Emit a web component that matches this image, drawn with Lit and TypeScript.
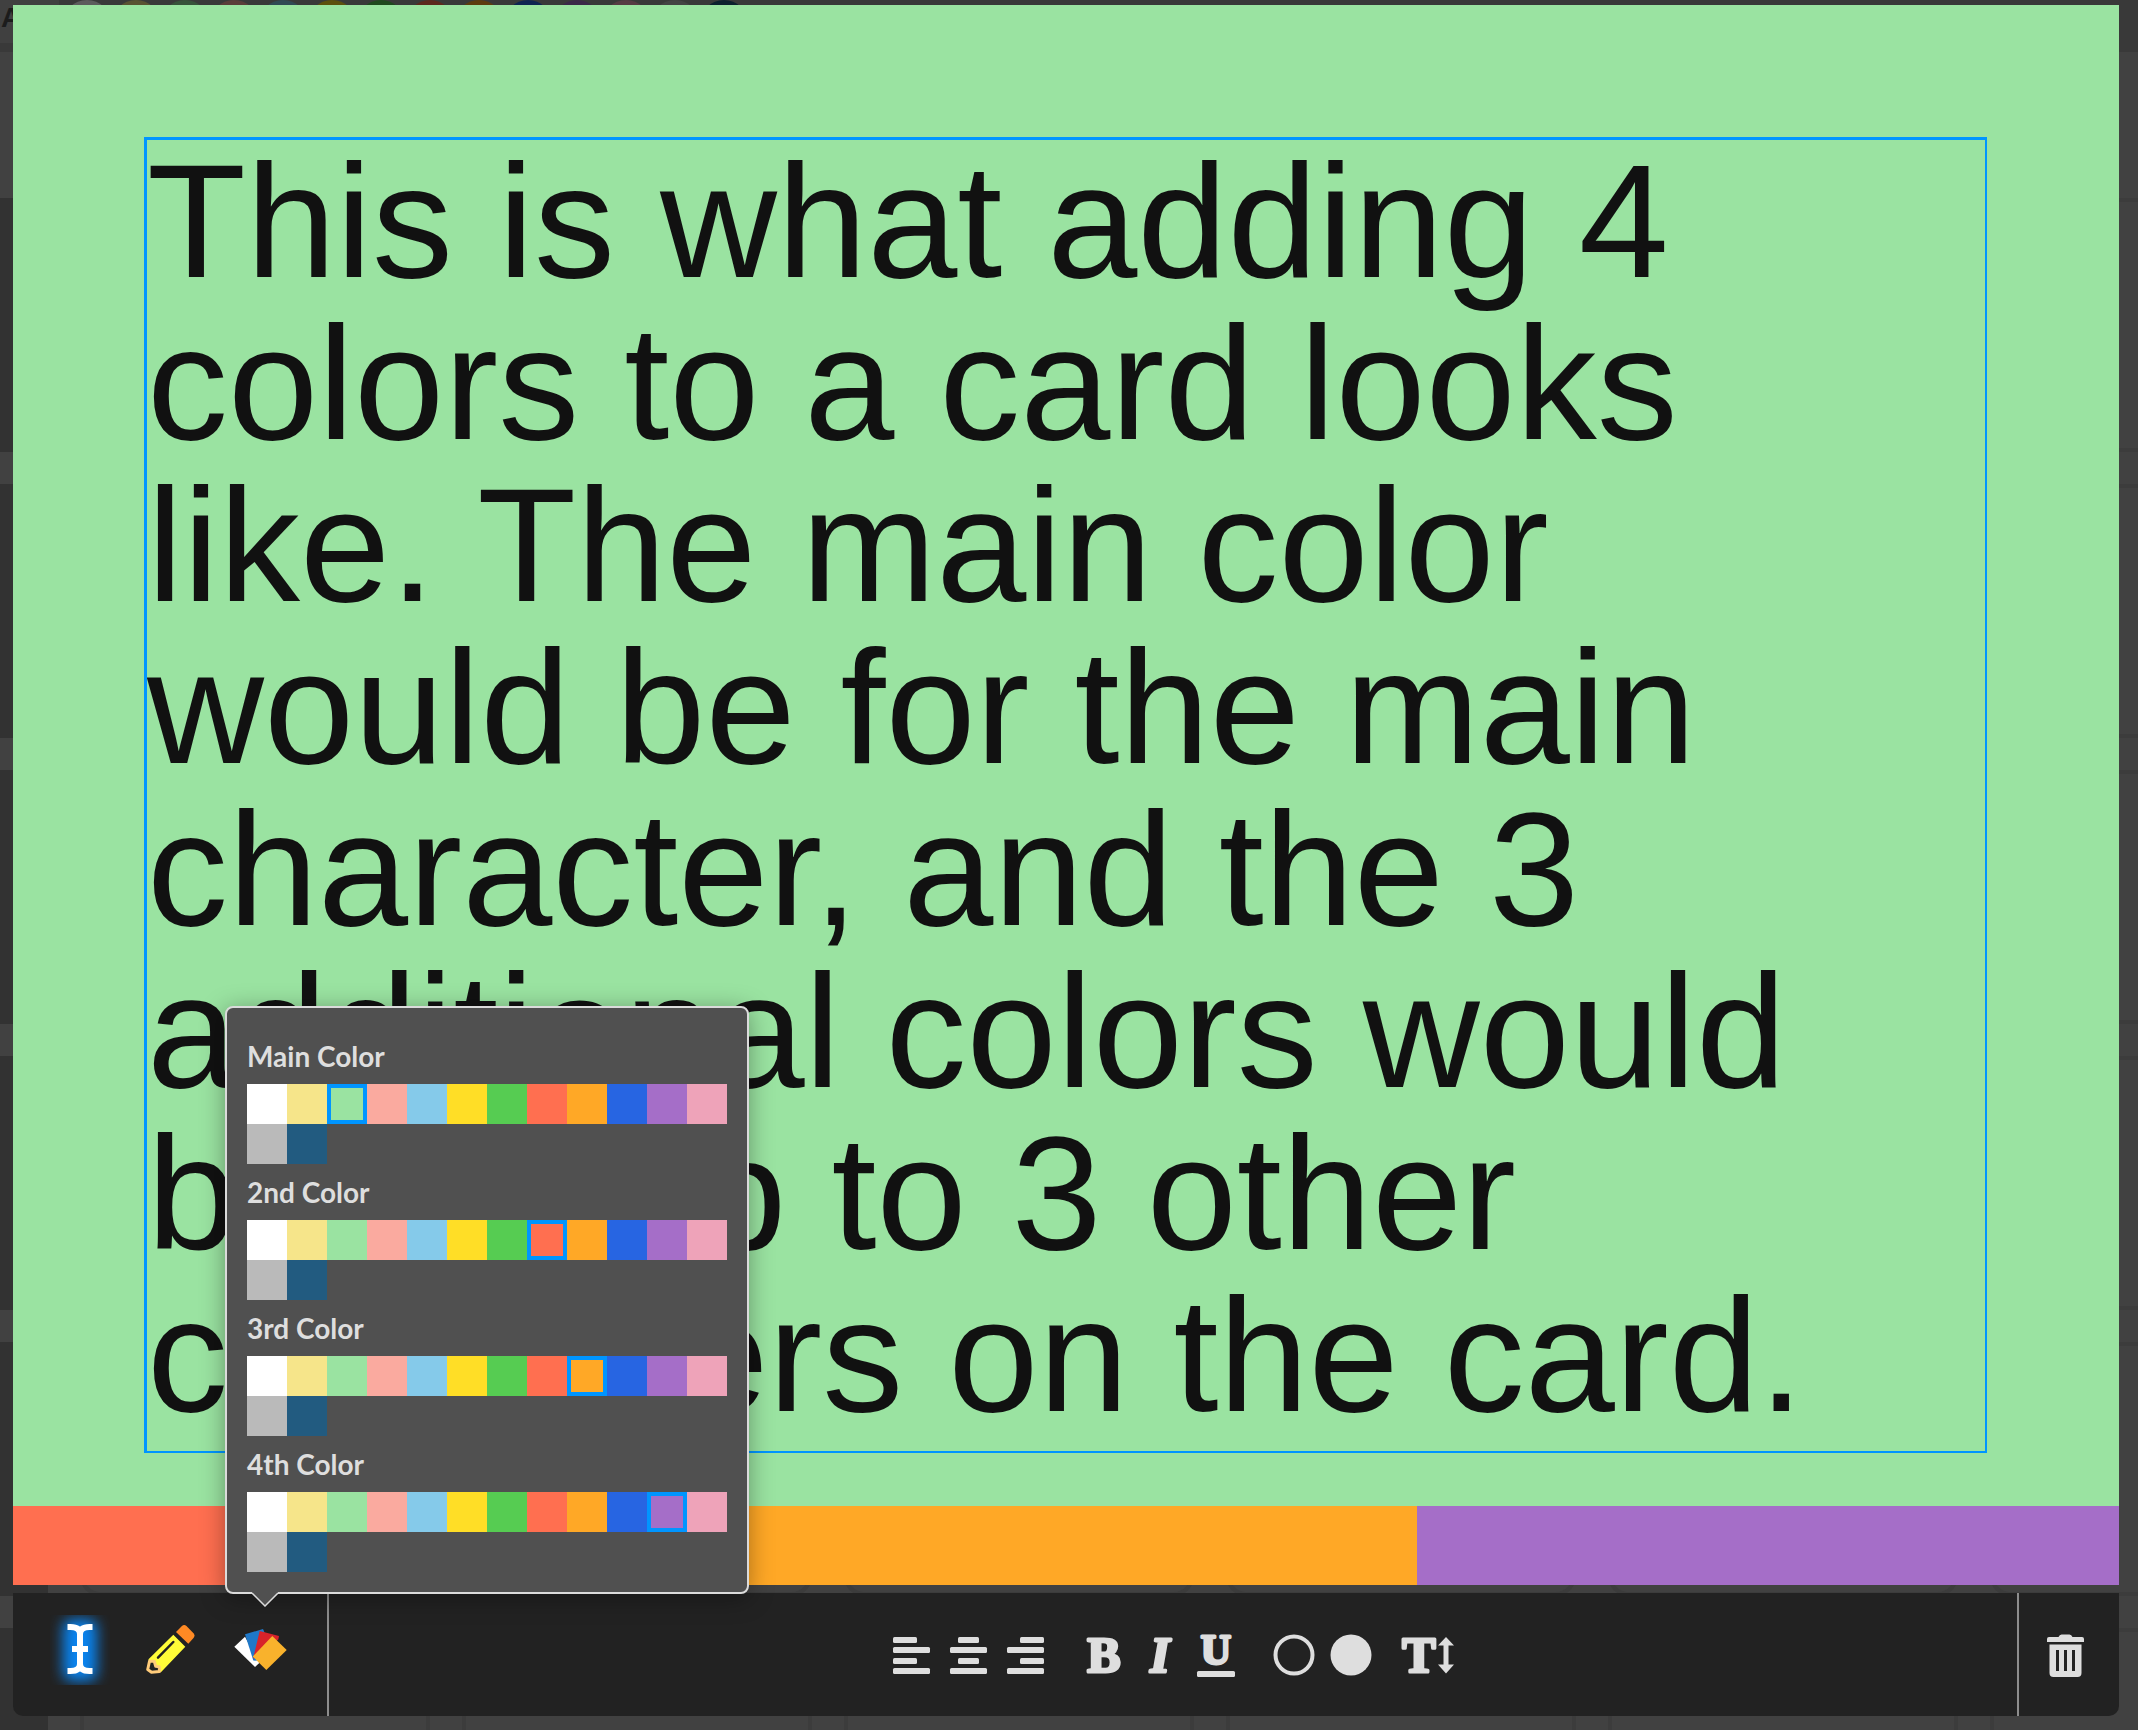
import { LitElement, html, css, svg } from "lit";
import { customElement, state } from "lit/decorators.js";
import { classMap } from "lit/directives/class-map.js";

interface Swatch {
  name: string;
  value: string;
}

const PALETTE: Swatch[] = [
  { name: "White", value: "#ffffff" },
  { name: "Cream", value: "#f6e58a" },
  { name: "Mint", value: "#9ae3a1" },
  { name: "Salmon", value: "#faaa9f" },
  { name: "Sky", value: "#85caea" },
  { name: "Yellow", value: "#ffde26" },
  { name: "Green", value: "#56cc52" },
  { name: "Coral", value: "#ff6f50" },
  { name: "Orange", value: "#ffa826" },
  { name: "Blue", value: "#2765e2" },
  { name: "Purple", value: "#a56ec8" },
  { name: "Pink", value: "#eea3b9" },
  { name: "Grey", value: "#bababa" },
  { name: "Navy", value: "#225b80" },
];

const LABELS = ["Main Color", "2nd Color", "3rd Color", "4th Color"];

const STORY =
  "This is what adding 4 colors to a card looks like. The main color would be for the main character, and the 3 additional colors would be for up to 3 other characters on the card.";

const bars = (rows: number[][]) =>
  svg`${rows.map(([x, w], i) => svg`<rect x=${x} y=${[6, 16, 27, 37][i]} width=${w} height="6" rx="1.5"/>`)}`;

@customElement("board-backdrop")
export class BoardBackdrop extends LitElement {
  static styles = css`
    :host {
      display: block;
      height: 100%;
      overflow: hidden;
      background: #414141;
    }
    .topbar {
      height: 52px;
      display: flex;
      align-items: flex-start;
      background: #393939;
      box-sizing: border-box;
    }
    .name {
      flex: none;
      width: 59px;
      height: 43px;
      padding-left: 1px;
      box-sizing: border-box;
      background: #404040;
      color: #1c1c1c;
      font: bold 28px/36px "Liberation Sans", Arial, sans-serif;
    }
    .dots {
      display: flex;
      gap: 1px;
      padding-left: 4px;
    }
    .dot {
      width: 48px;
      height: 48px;
      border-radius: 50%;
      filter: brightness(0.36);
    }
    .board {
      padding-top: 146px;
      display: grid;
      grid-template-columns: 48px 1fr;
      column-gap: 32px;
    }
    .chapters,
    .cards {
      display: grid;
      grid-auto-rows: 254px;
      gap: 32px;
    }
    .chapter {
      background: #323232;
    }
    .cards {
      grid-template-columns: repeat(6, 350px);
    }
    .slot {
      border: 4px solid #3c3c3c;
      border-radius: 20px;
    }
  `;

  render() {
    return html`
      <div class="topbar">
        <div class="name">A</div>
        <div class="dots">
          ${PALETTE.map((s) => html`<span class="dot" style="background:${s.value}"></span>`)}
        </div>
      </div>
      <div class="board">
        <div class="chapters">${Array.from({ length: 6 }, () => html`<div class="chapter"></div>`)}</div>
        <div class="cards">${Array.from({ length: 36 }, () => html`<div class="slot"></div>`)}</div>
      </div>
    `;
  }
}

@customElement("app-root")
export class AppRoot extends LitElement {
  @state() private picked = [2, 7, 8, 10];

  static styles = css`
    :host {
      display: block;
      position: relative;
      min-height: 100vh;
      overflow: hidden;
      font-family: Lato, "Liberation Sans", sans-serif;
    }
    .backdrop {
      position: absolute;
      inset: 0;
    }
    .editor {
      position: relative;
      display: flex;
      flex-direction: column;
      gap: 8px;
      padding: 5px 19px 14px 13px;
    }
    .body {
      padding: 132px 132px 53px 131px;
    }
    .story {
      display: block;
      box-sizing: border-box;
      width: 100%;
      margin: 0;
      padding: 0 0 15px;
      border: solid #0095ff;
      border-width: 3px 2px 2px 3px;
      border-radius: 0;
      background: none;
      color: #111;
      font: 162px/162px "Liberation Sans", Arial, sans-serif;
      resize: none;
      outline: none;
      overflow: hidden;
    }
    .bands {
      display: flex;
      height: 79px;
    }
    .band {
      flex: 1;
    }
    .toolbar {
      position: relative;
      display: flex;
      height: 123px;
      background: #222;
      border-radius: 0 0 10px 10px;
    }
    .modes,
    .format,
    .danger,
    .set {
      display: flex;
      align-items: center;
      justify-content: center;
    }
    .modes {
      padding: 0 22px 10px;
      border-right: 2px solid #8d8d8d;
    }
    .format {
      flex: 1;
      gap: 20px;
    }
    .danger {
      border-left: 2px solid #8d8d8d;
    }
    button {
      display: flex;
      align-items: center;
      justify-content: center;
      padding: 0;
      border: 0;
      background: none;
      color: #dedede;
      cursor: pointer;
    }
    .mode {
      width: 90px;
      height: 70px;
    }
    .tool {
      width: 57px;
      height: 80px;
    }
    .size {
      width: 62px;
    }
    .trash {
      width: 100px;
      height: 80px;
    }
    svg {
      display: block;
      flex: none;
      fill: currentColor;
    }
    .active svg {
      overflow: hidden;
    }
    .halo {
      filter: blur(7px);
    }
    .letter {
      font: bold 50px "Liberation Serif", serif;
      stroke: currentColor;
      stroke-width: 3px;
      stroke-linejoin: round;
    }
    .letter.small {
      font-size: 42px;
    }
    .letter.slant {
      font-style: italic;
    }
    .popup {
      position: absolute;
      left: 212px;
      bottom: 122px;
      width: 480px;
      padding: 20px;
      border: 2px solid #dbdbdb;
      border-radius: 8px;
      background: #505050;
      box-shadow: 0 4px 24px rgba(0, 0, 0, 0.35);
    }
    .arrow {
      position: absolute;
      left: 24px;
      top: 100%;
    }
    .label {
      color: #dedede;
      font-size: 28px;
      font-weight: 700;
      line-height: 56px;
    }
    .swatches {
      display: flex;
      flex-wrap: wrap;
    }
    .swatch {
      appearance: none;
      width: 40px;
      height: 40px;
      margin: 0;
      border: 0 solid #0095ff;
      border-radius: 0;
      cursor: pointer;
    }
    .swatch.on {
      border-width: 4px;
    }
  `;

  private pick(slot: number, index: number) {
    this.picked = this.picked.map((v, i) => (i === slot ? index : v));
  }

  private renderPicker(label: string, slot: number) {
    return html`
      <div role="radiogroup" aria-labelledby="label-${slot}">
        <div class="label" id="label-${slot}">${label}</div>
        <div class="swatches">
          ${PALETTE.map(
            (s, i) => html`<input
              type="radio"
              name="color-${slot}"
              aria-label=${s.name}
              class=${classMap({ swatch: true, on: this.picked[slot] === i })}
              style="background:${s.value}"
              .checked=${this.picked[slot] === i}
              @change=${() => this.pick(slot, i)}
            />`
          )}
        </div>
      </div>
    `;
  }

  private tool(label: string, icon: unknown) {
    return html`<button class="tool" type="button" aria-label=${label}>
      <svg width="57" height="80" viewBox="0 -16 57 80">${icon}</svg>
    </button>`;
  }

  render() {
    const color = (slot: number) => PALETTE[this.picked[slot]].value;
    return html`
      <board-backdrop class="backdrop" aria-hidden="true"></board-backdrop>
      <main class="editor">
        <section class="card" style="background:${color(0)}">
          <div class="body">
            <textarea class="story" rows="8" aria-label="Card text" spellcheck="false" .value=${STORY}></textarea>
          </div>
          <div class="bands">
            ${[1, 2, 3].map((n) => html`<div class="band" style="background:${color(n)}"></div>`)}
          </div>
        </section>

        <div class="toolbar">
          <div class="modes">
            <button class="mode active" type="button" aria-label="Text">
              <svg width="60" height="70" viewBox="0 0 60 70">
                <rect class="halo" x="13" y="4" width="34" height="62" rx="8" fill="#0a84f0" />
                <g fill="none" stroke="#fff" stroke-width="6" stroke-linejoin="round">
                  <path d="M17.5 12h3q9.500 0 9.500 7v30q0 7-9.500 7h-3M42.500 12h-3q-9.500 0-9.500 7v30q0 7 9.500 7h3M22 34h16" />
                </g>
              </svg>
            </button>
            <button class="mode" type="button" aria-label="Draw">
              <svg width="49" height="49" viewBox="0 0 49 49">
                <path fill="#fffc38" d="M27.300 9.700 39.300 21.700 14.700 47.500 13 41.500 9.500 41 8 36 2.500 35.500V34.300Z" />
                <path stroke="#222" stroke-width="2.500" stroke-linecap="round" d="M12 32.700 27.300 17" />
                <path fill="#ff8a24" d="M30 7 35.700 1.200Q38 -1 40.500 1L47.500 8.200Q49.500 10.500 47.500 13L42.300 18.700Z" />
                <path fill="#222" stroke="#ffcb7a" stroke-width="3" stroke-linejoin="round"
                  d="M3.500 36.300 1.700 44.500 5.500 47.300 13.500 46.500 13.200 41.700 9.700 41.300 8.300 36.300Z" />
              </svg>
            </button>
            <button class="mode" type="button" aria-label="Colors" aria-expanded="true">
              <svg width="53" height="42" viewBox="0 0 53 42">
                <path fill="#fff" d="M.3 17.700 11 7.700 25.300 34 21 38Z" />
                <path fill="#1f78c8" d="M11 5.300 29 0 30.500 3.500 22.700 31.700 19.300 31.500Z" />
                <path fill="#d8232a" d="M25.700 2 45 7 44.300 10.500 19 29.800Z" />
                <path fill="#f9b22c" d="M38.300 7 52.700 21 32.300 41 18.700 27.500Z" />
              </svg>
            </button>
          </div>

          <div class="format">
            <div class="set">
              ${this.tool("Align left", bars([[9, 24], [9, 37], [9, 24], [9, 37]]))}
              ${this.tool("Align center", bars([[17, 21], [9, 37], [17, 21], [9, 37]]))}
              ${this.tool("Align right", bars([[22, 24], [9, 37], [22, 24], [9, 37]]))}
            </div>
            <div class="set">
              ${this.tool("Bold", svg`<text class="letter" x="29" y="41" text-anchor="middle">B</text>`)}
              ${this.tool("Italic", svg`<text class="letter slant" x="28" y="41" text-anchor="middle">I</text>`)}
              ${this.tool(
                "Underline",
                svg`<text class="letter small" x="27" y="33" text-anchor="middle">U</text><rect x="8" y="40" width="38" height="6" rx="1.5"/>`
              )}
            </div>
            <div class="set">
              ${this.tool("Outline", svg`<circle cx="28" cy="24" r="18.500" fill="none" stroke="currentColor" stroke-width="4"/>`)}
              ${this.tool("Fill", svg`<circle cx="28" cy="24" r="20.500"/>`)}
            </div>
            <button class="tool size" type="button" aria-label="Text size">
              <svg width="62" height="80" viewBox="0 -16 62 80">
                <text class="letter" x="19" y="41" text-anchor="middle">T</text>
                <path d="M46 6 54 14.500H48.500V33.500H54L46 42.500 38 33.500H43.500V14.500H38Z" />
              </svg>
            </button>
          </div>

          <div class="danger">
            <button class="trash" type="button" aria-label="Delete card">
              <svg width="100" height="48" viewBox="0 0 100 48">
                <path d="M30 6H39.500Q40.500 3.500 42.500 3.500H50.500Q52.500 3.500 53.500 6H63Q65 6 65 8V11H28V8Q28 6 30 6Z" />
                <path fill-rule="evenodd" d="M30.500 13.500H62.500V42Q62.500 46 58.500 46H34.500Q30.500 46 30.500 42ZM37 19V40H40V19ZM45 19V40H48V19ZM53 19V40H56V19Z" />
              </svg>
            </button>
          </div>

          <div class="popup" role="dialog" aria-label="Card colors">
            ${LABELS.map((label, slot) => this.renderPicker(label, slot))}
            <svg class="arrow" width="28" height="15" viewBox="0 0 28 15">
              <path fill="#505050" d="M1 0H27V2L14 14 1 2Z" />
              <path fill="none" stroke="#dbdbdb" stroke-width="1.500" d="M1 1 14 14 27 1" />
            </svg>
          </div>
        </div>
      </main>
    `;
  }
}
